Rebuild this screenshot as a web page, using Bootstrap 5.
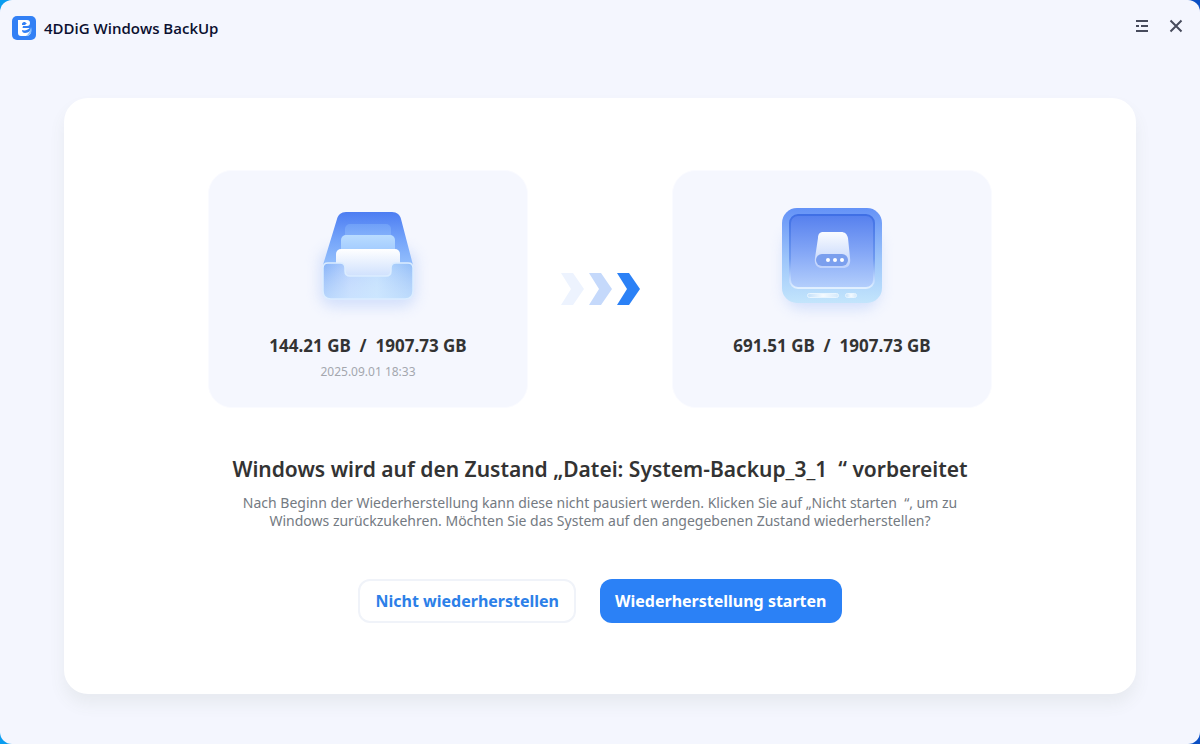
<!DOCTYPE html>
<html lang="de">
<head>
<meta charset="utf-8">
<meta name="viewport" content="width=device-width, initial-scale=1">
<title>4DDiG Windows BackUp</title>
<link rel="stylesheet" href="https://cdn.jsdelivr.net/npm/bootstrap@5.3.0/dist/css/bootstrap.min.css">
<style>
  body { font-family: "Noto Sans", "Open Sans", sans-serif; background: linear-gradient(90deg, #0a9df0 50%, #0a4fc4 50%); color: #333; }
  .app-window { background: #f4f6fe; border-radius: 12px; }
  .app-bar { height: 56px; padding: 0 7px 0 12px; }
  .app-title { font: 600 15px/20px "Open Sans", sans-serif; color: #0b1030; }
  .tool-btn { width: 34px; height: 34px; margin-bottom: 4px; color: #474b5c; }
  .app-main { padding: 42px 64px 50px; }
  .panel { background: #fff; border-radius: 24px; padding: 72px 24px 24px; box-shadow: 0 10px 16px rgba(90, 105, 80, .08); }
  .disk-tile { width: 320px; height: 238px; padding-top: 24px; background: #f5f7fe; border: 1px solid #fafbff; border-radius: 24px; }
  .disk-size { font-size: 17px; line-height: 24px; font-weight: 700; white-space: pre; margin-top: 9px; }
  .disk-date { font-size: 12px; line-height: 16px; color: #a4a7ae; margin-top: 6px; }
  .arrow-gap { width: 144px; }
  .headline { font-size: 21px; line-height: 30px; font-weight: 600; margin: 46px 0 10px; white-space: pre-wrap; }
  .hint { font-size: 14px; line-height: 18px; color: #747a82; white-space: pre-wrap; max-width: 800px; }
  .actions { margin-top: 49px; }
  .action { height: 44px; border-radius: 12px; font-size: 16px; font-weight: 700; line-height: 24px; padding: 0 15px; }
  .action-plain { color: #2c7fe8; background: #fff; border: 2px solid #f0f3f9; }
  .action-main, .action-main:hover { color: #fff; background: #2b81f6; border: 0; }
</style>
</head>
<body>
<div class="app-window min-vh-100 d-flex flex-column">
  <header class="app-bar d-flex align-items-center justify-content-between">
    <div class="d-flex align-items-center gap-2">
      <svg width="24" height="24" viewBox="0 0 24 24" aria-hidden="true">
        <rect width="24" height="24" rx="5" fill="#3280f5"/>
        <path d="M6 4h9c2 0 3 1 3 3s-1 3-3 3h-4l-.5 2H17c3 1 3 8-3 8H9c-2 0-3-1-3-3z" fill="#fff"/>
        <path d="M10 9V8c0-1 1-2 2-2h2l-1 1h2l-2 2z" fill="#3280f5"/>
        <path d="M10 14c3 1 6 0 9-3 0 3-2 6-6 6-2 0-3-1-3-3z" fill="#3280f5"/>
        <path d="M19 11c2 5-1 9-5 9 3-2 4-5 5-9z" fill="#86bfff"/>
      </svg>
      <span class="app-title">4DDiG Windows BackUp</span>
    </div>
    <div class="d-flex">
      <button type="button" class="btn tool-btn border-0 p-0 d-flex align-items-center justify-content-center" aria-label="Menü">
        <svg width="14" height="14" viewBox="0 0 14 14" stroke="currentColor" stroke-width="2"><path d="M1 2h12M1 7h3M6 7h7M1 12h12"/></svg>
      </button>
      <button type="button" class="btn tool-btn border-0 p-0 d-flex align-items-center justify-content-center" aria-label="Schließen">
        <svg width="14" height="14" viewBox="0 0 14 14" stroke="currentColor" stroke-width="2"><path d="M1.5 1.5l11 11M12.5 1.5l-11 11"/></svg>
      </button>
    </div>
  </header>

  <main class="app-main flex-grow-1 d-flex flex-column">
    <section class="panel flex-grow-1 d-flex flex-column align-items-center text-center">
      <div class="d-flex align-items-center justify-content-center">
        <div class="disk-tile d-flex flex-column align-items-center">
          <svg width="136" height="130" viewBox="0 0 136 130" aria-hidden="true">
            <defs>
              <linearGradient id="back" x1="0" y1="0" x2="0" y2="1"><stop stop-color="#4d7df2"/><stop offset=".55" stop-color="#76a6fa"/><stop offset="1" stop-color="#94bffc"/></linearGradient>
              <linearGradient id="sheet1" x1="0" y1="0" x2="0" y2="1"><stop stop-color="#70a0f8"/><stop offset="1" stop-color="#9cc7ff"/></linearGradient>
              <linearGradient id="sheet2" x1="0" y1="0" x2="0" y2="1"><stop stop-color="#b9dcff"/><stop offset="1" stop-color="#8fbdff"/></linearGradient>
              <linearGradient id="sheet3" x1="0" y1="0" x2="0" y2="1"><stop stop-color="#fff"/><stop offset="1" stop-color="#c3d9fd"/></linearGradient>
              <linearGradient id="front" x1="0" y1="0" x2="1" y2="0"><stop stop-color="#85b2f8"/><stop offset=".3" stop-color="#b3cffd"/><stop offset=".6" stop-color="#b9dafe"/><stop offset="1" stop-color="#92bdf8"/></linearGradient>
              <linearGradient id="frontGlow" x1="0" y1="0" x2="0" y2="1"><stop stop-color="#fff" stop-opacity="0"/><stop offset="1" stop-color="#d8eeff" stop-opacity=".6"/></linearGradient>
              <filter id="soft" x="-30%" y="-30%" width="160%" height="160%"><feGaussianBlur stdDeviation="7"/></filter>
            </defs>
            <rect x="20" y="54" width="96" height="58" rx="14" fill="#a9c3f8" opacity=".45" filter="url(#soft)"/>
            <path d="M46 17h46c5 0 8 3 9 7l12 46H23l14-46c1-4 4-7 9-7z" fill="url(#back)"/>
            <rect x="45" y="29" width="46" height="30" rx="5" fill="url(#sheet1)"/>
            <rect x="41" y="40" width="54" height="30" rx="5" fill="url(#sheet2)"/>
            <rect x="36" y="54" width="64" height="34" rx="5" fill="url(#sheet3)"/>
            <path d="M28 68h12c3 0 5 2 5 5v3c0 3 2 5 5 5h36c3 0 5-2 5-5v-3c0-3 2-5 5-5h12c3 0 5 2 5 5v23c0 5-3 8-8 8H31c-5 0-8-3-8-8V73c0-3 2-5 5-5z" fill="url(#front)"/>
            <path d="M28 68h12c3 0 5 2 5 5v3c0 3 2 5 5 5h36c3 0 5-2 5-5v-3c0-3 2-5 5-5h12c3 0 5 2 5 5v23c0 5-3 8-8 8H31c-5 0-8-3-8-8V73c0-3 2-5 5-5z" fill="url(#frontGlow)" stroke="#dcedff" stroke-width="1.5"/>
          </svg>
          <div class="disk-size">144.21 GB  /  1907.73 GB</div>
          <div class="disk-date">2025.09.01 18:33</div>
        </div>

        <div class="arrow-gap d-flex justify-content-center">
          <svg width="80" height="32" viewBox="0 0 80 32" aria-hidden="true">
            <path d="M1 0h12l11 16-11 16H1l10-16z" fill="#edf3fe"/>
            <path d="M29 0h12l11 16-11 16H29l10-16z" fill="#c5d9fb"/>
            <path d="M57 0h12l11 16-11 16H57l10-16z" fill="#2b81f6"/>
          </svg>
        </div>

        <div class="disk-tile d-flex flex-column align-items-center">
          <svg width="136" height="130" viewBox="0 0 136 130" aria-hidden="true">
            <defs>
              <linearGradient id="frame" x1="0" y1="0" x2="0" y2="1"><stop stop-color="#6492f7"/><stop offset=".55" stop-color="#9ec6fa"/><stop offset="1" stop-color="#c3e5fc"/></linearGradient>
              <linearGradient id="screen" x1="0" y1="0" x2="0" y2="1"><stop stop-color="#5680ee"/><stop offset=".5" stop-color="#83a6f6"/><stop offset="1" stop-color="#b4cffc"/></linearGradient>
              <linearGradient id="rim" x1="0" y1="0" x2="0" y2="1"><stop stop-color="#3f6fe5"/><stop offset=".6" stop-color="#6f9af0"/><stop offset=".9" stop-color="#c4dcff"/><stop offset="1" stop-color="#e2f0ff"/></linearGradient>
              <linearGradient id="drive" x1="0" y1="0" x2="0" y2="1"><stop stop-color="#fafcff"/><stop offset="1" stop-color="#bdd1fc"/></linearGradient>
              <linearGradient id="slot" x1="0" y1="0" x2="1" y2="0"><stop stop-color="#c3e0fa"/><stop offset=".5" stop-color="#f4faff"/><stop offset="1" stop-color="#d4e9fb"/></linearGradient>
            </defs>
            <rect x="20" y="34" width="96" height="80" rx="18" fill="#a9c3f8" opacity=".45" filter="url(#soft)"/>
            <rect x="18" y="13" width="100" height="95" rx="15" fill="url(#frame)"/>
            <rect x="26" y="20" width="84" height="73" rx="8" fill="url(#screen)" stroke="url(#rim)" stroke-width="2"/>
            <path d="M59 37h18c4 0 6 2 7 6l2 20c1 7-2 10-7 10H58c-5 0-8-4-7-10l3-20c0-4 2-6 5-6z" fill="url(#drive)"/>
            <rect x="52" y="59" width="32" height="12" rx="6" fill="#7b9fee"/>
            <g fill="#fff"><circle cx="64" cy="65" r="2"/><circle cx="71" cy="65" r="2"/><circle cx="78" cy="65" r="2"/></g>
            <rect x="43.500" y="98.500" width="31" height="4" rx="2" fill="url(#slot)" stroke="#e8f5ff"/>
            <rect x="81.500" y="98.500" width="11" height="4" rx="2" fill="url(#slot)" stroke="#e8f5ff"/>
          </svg>
          <div class="disk-size">691.51 GB  /  1907.73 GB</div>
        </div>
      </div>

      <h1 class="headline">Windows wird auf den Zustand „Datei: System-Backup_3_1  “ vorbereitet</h1>
      <p class="hint mb-0">Nach Beginn der Wiederherstellung kann diese nicht pausiert werden. Klicken Sie auf „Nicht starten  “, um zu
Windows zurückzukehren. Möchten Sie das System auf den angegebenen Zustand wiederherstellen?</p>
      <div class="actions d-flex justify-content-center gap-4">
        <button type="button" class="btn action action-plain">Nicht wiederherstellen</button>
        <button type="button" class="btn action action-main">Wiederherstellung starten</button>
      </div>
    </section>
  </main>
</div>
<script src="https://cdn.jsdelivr.net/npm/bootstrap@5.3.0/dist/js/bootstrap.bundle.min.js"></script>
</body>
</html>
